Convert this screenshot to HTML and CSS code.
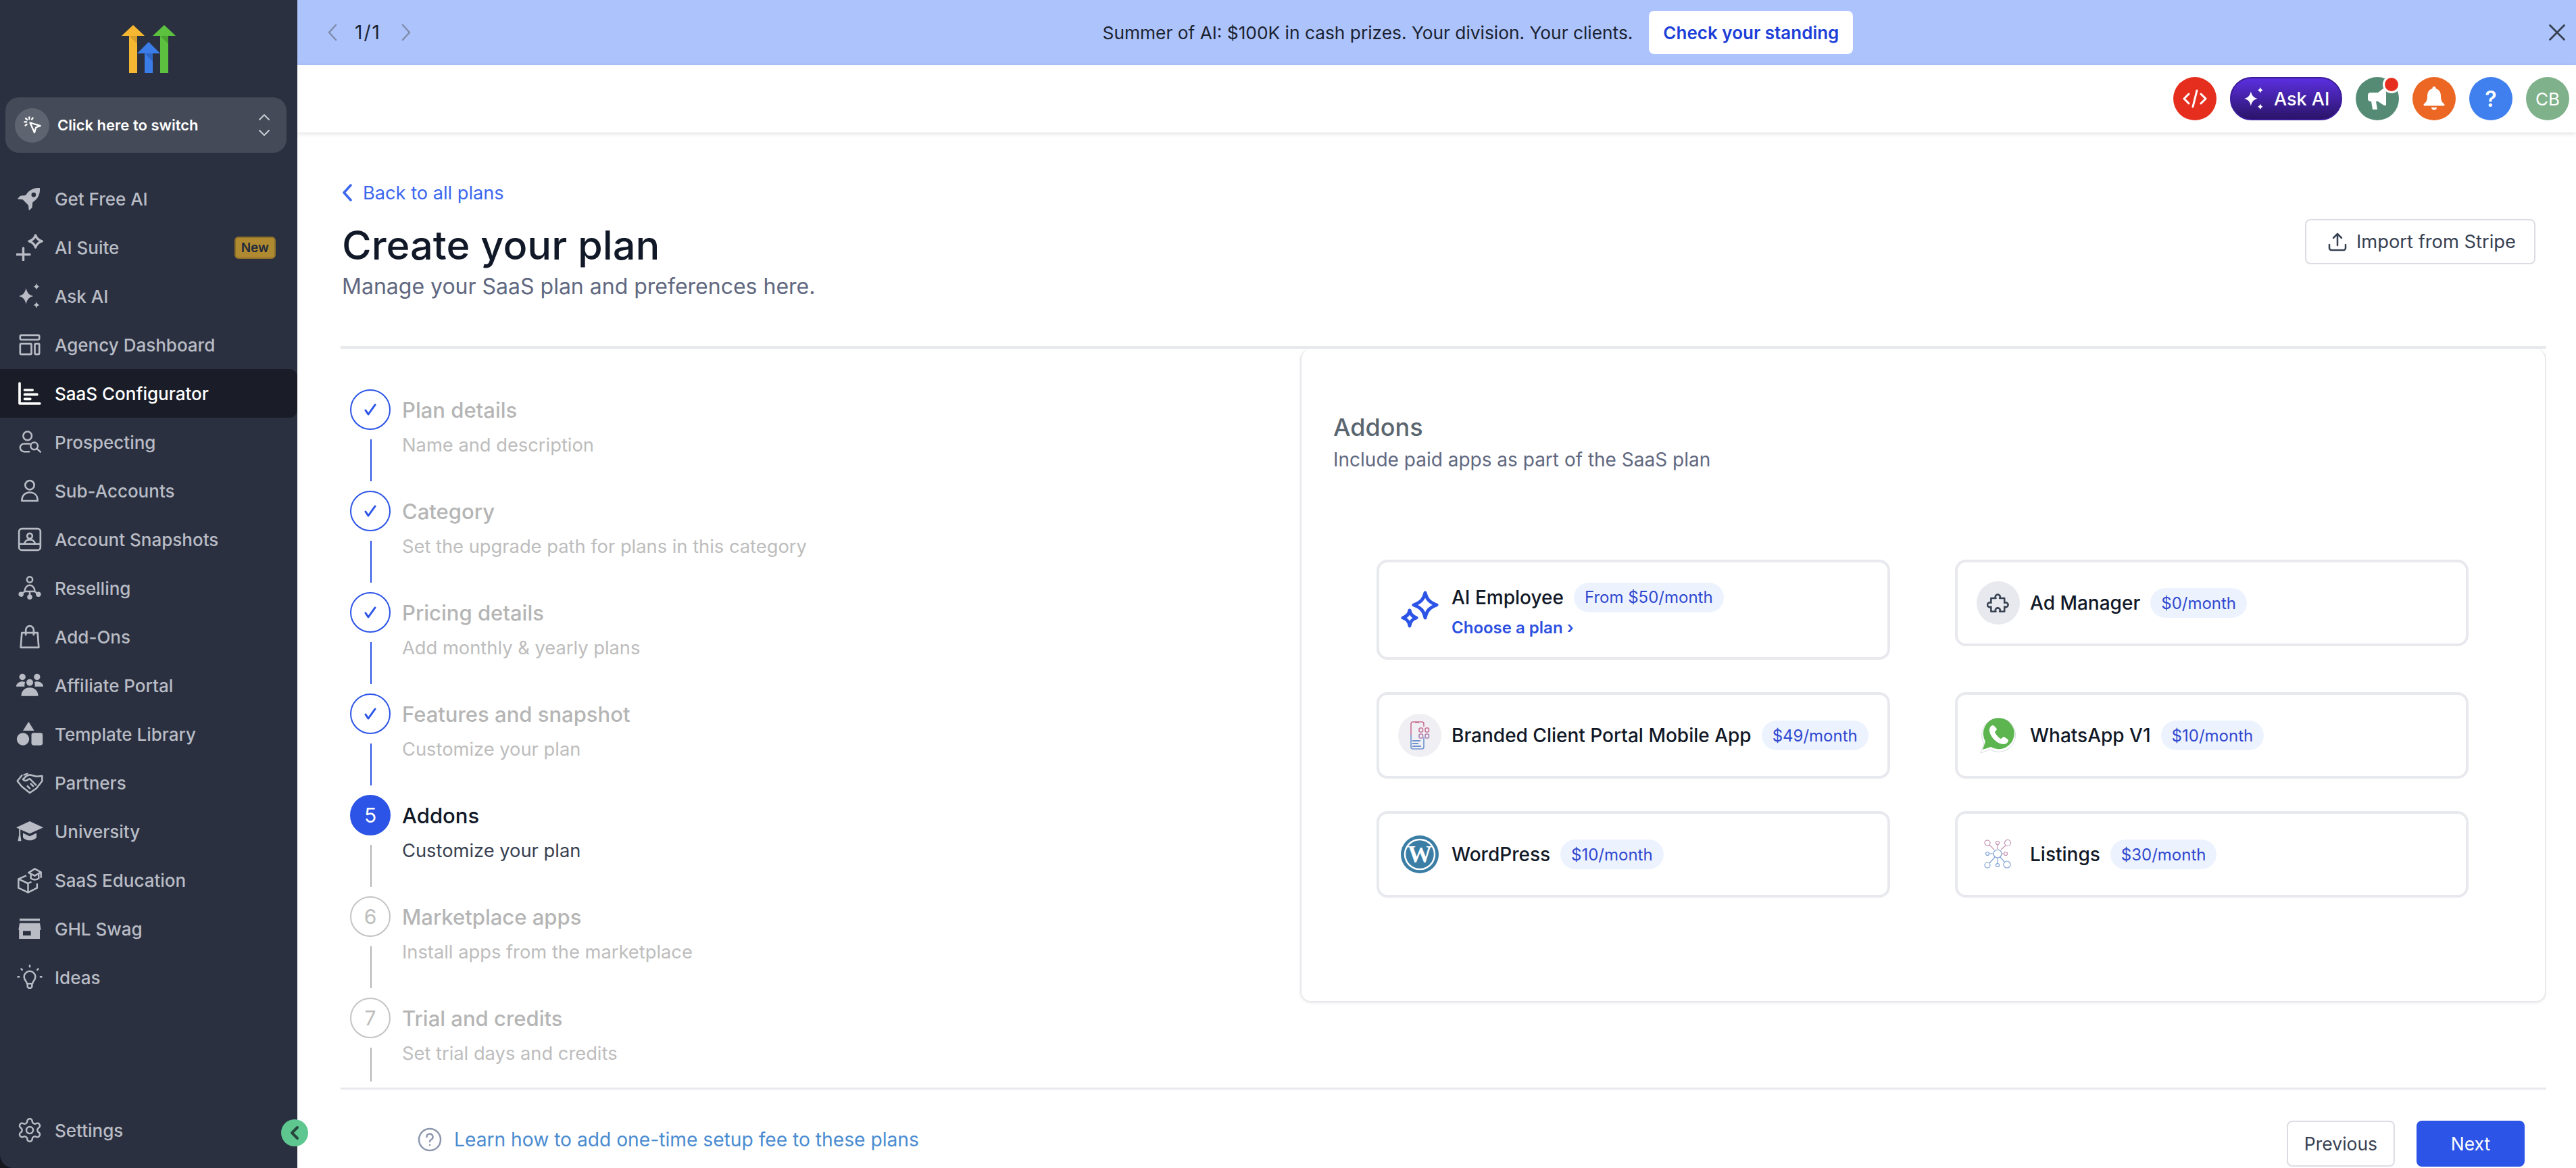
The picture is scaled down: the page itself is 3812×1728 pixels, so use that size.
FILE: index.html
```html
<!DOCTYPE html>
<html lang="en">
<head>
    <meta charset="UTF-8">
    <meta name="viewport" content="width=device-width, initial-scale=1.0">
    <title>Create your plan</title>
    <link rel="stylesheet" href="styles.css">
</head>
<body>
    <div class="app">
        <aside class="sidebar">
            <div class="logo">
                <svg width="80" height="71" viewBox="0 0 80 71">
                    <path fill="#f5b731" d="M17 0l17 16H23v55H11V16H0z"/>
                    <path fill="#d99f2d" d="M11 16h12v12z"/>
                    <path fill="#3b7de8" d="M40 25l17 17H46v29H34V42H23z"/>
                    <path fill="#2f66c4" d="M34 42h12v12z"/>
                    <path fill="#5cc13f" d="M63 0l17 16H69v55H57V16H46z"/>
                    <path fill="#4ba233" d="M57 16h12v12z"/>
                </svg>
            </div>
            <div class="switcher">
                <span class="switcher-icon">
                    <svg width="28" height="28" viewBox="0 0 24 24" fill="none" stroke="#fff" stroke-width="2" stroke-linecap="round" stroke-linejoin="round">
                        <path d="M9 9l13 4-5.500 2-2 6.500z"/>
                        <path d="M8 2v2.500M2 8h2.500M3.500 3.500l1.800 1.800M3 12.500l1.800-1.300M12.500 3l-1.300 1.800"/>
                    </svg>
                </span>
                <span class="switcher-label">Click here to switch</span>
                <svg class="switcher-caret" width="18" height="34" viewBox="0 0 18 34" fill="none" stroke="#c9ccd3" stroke-width="2" stroke-linecap="round" stroke-linejoin="round">
                    <path d="M2 9l7-7 7 7M2 25l7 7 7-7"/>
                </svg>
            </div>
            <nav class="nav">
                <a class="nav-item">
                    <svg class="nav-icon" viewBox="0 0 24 24" fill="currentColor"><path fill-rule="evenodd" d="M21 2.500c-4.500-.3-8.400 1.300-11 4.300L8.300 9 3.600 9.500 1 12.300l4.800.5 5 5 .5 4.700 2.800-2.600.5-4.700 2.200-1.700c3-2.600 4.500-6.500 4.200-11zM15.500 6.500a2 2 0 1 1 0 4 2 2 0 0 1 0-4z"/></svg>
                    Get Free AI
                </a>
                <a class="nav-item">
                    <svg class="nav-icon" viewBox="1 1.500 21 21" fill="none" stroke="currentColor" stroke-width="1.800" stroke-linecap="round" stroke-linejoin="round"><path d="M1.500 17.500h10M6.500 12.500v9.500"/><path d="M16 2.500c.7 2.300 2.200 3.800 5 4.700-2.800.9-4.300 2.400-5 4.800-.7-2.400-2.200-3.900-5-4.800 2.800-.9 4.300-2.400 5-4.700z"/></svg>
                    AI Suite
                    <span class="badge-new">New</span>
                </a>
                <a class="nav-item">
                    <svg class="nav-icon" viewBox="2 1 20 22" fill="currentColor"><path d="M9 5.500c.9 3.800 2.300 5.600 6 6.500-3.700.9-5.100 2.700-6 6.500-.9-3.800-2.300-5.600-6-6.500 3.700-.9 5.100-2.700 6-6.500zM17.500 1.500c.4 1.600 1.100 2.300 2.500 2.800-1.400.4-2.100 1.200-2.500 2.700-.4-1.500-1.100-2.300-2.500-2.700 1.400-.5 2.100-1.200 2.500-2.800zM17.500 16.500c.4 1.600 1.100 2.300 2.500 2.800-1.400.4-2.100 1.200-2.500 2.700-.4-1.500-1.100-2.300-2.500-2.700 1.400-.5 2.100-1.200 2.500-2.800z"/></svg>
                    Ask AI
                </a>
                <a class="nav-item">
                    <svg class="nav-icon" viewBox="0 0 24 24" fill="none" stroke="currentColor" stroke-width="1.600" stroke-linejoin="round"><rect x="3.500" y="3.500" width="17" height="4" rx="1"/><rect x="3.500" y="11" width="10" height="9.500" rx="1"/><rect x="16.500" y="11" width="4" height="9.500" rx="1"/></svg>
                    Agency Dashboard
                </a>
                <a class="nav-item active">
                    <svg class="nav-icon" viewBox="0 0 24 24" fill="none" stroke="currentColor" stroke-width="2.200" stroke-linecap="round" stroke-linejoin="round"><path d="M3 3v18h18"/><path d="M7.500 9h7M7.500 13h11M7.500 17h5"/></svg>
                    SaaS Configurator
                </a>
                <a class="nav-item">
                    <svg class="nav-icon" viewBox="0 0 24 24" fill="none" stroke="currentColor" stroke-width="1.500" stroke-linecap="round"><circle cx="10" cy="6.500" r="3.800"/><path d="M11.500 20.500H7a3.500 3.500 0 0 1 0-7h5"/><circle cx="16" cy="15.500" r="3.200"/><path d="M18.500 18l3 2.800"/></svg>
                    Prospecting
                </a>
                <a class="nav-item">
                    <svg class="nav-icon" viewBox="0 0 24 24" fill="none" stroke="currentColor" stroke-width="1.600" stroke-linejoin="round"><circle cx="12" cy="7" r="4"/><path d="M5 21c0-5 3-7.500 7-7.500s7 2.500 7 7.500z"/></svg>
                    Sub-Accounts
                </a>
                <a class="nav-item">
                    <svg class="nav-icon" viewBox="0 0 24 24" fill="none" stroke="currentColor" stroke-width="1.600" stroke-linejoin="round"><rect x="2.500" y="2.500" width="19" height="19" rx="2.500"/><path d="M2.500 16h19"/><circle cx="12" cy="9" r="2.300"/><path d="M7.500 16c0-2.500 2-3.800 4.500-3.800s4.500 1.300 4.500 3.800"/></svg>
                    Account Snapshots
                </a>
                <a class="nav-item">
                    <svg class="nav-icon" viewBox="0 0 24 24" fill="none" stroke="currentColor" stroke-width="1.500"><circle cx="12" cy="4.500" r="2.500"/><path d="M7.500 15c0-3 2-5.500 4.500-5.500s4.500 2.500 4.500 5.500M4.500 17.500l3-2.500h9l3 2.500M12 15v4"/><circle cx="4.300" cy="17.500" r="1.500" fill="currentColor"/><circle cx="12" cy="20" r="1.500" fill="currentColor"/><circle cx="19.700" cy="17.500" r="1.500" fill="currentColor"/></svg>
                    Reselling
                </a>
                <a class="nav-item">
                    <svg class="nav-icon" viewBox="0 0 24 24" fill="none" stroke="currentColor" stroke-width="1.600" stroke-linejoin="round"><path d="M5 8.500h14l1 13H4z"/><path d="M8.500 11V6a3.500 3.500 0 0 1 7 0v5"/></svg>
                    Add-Ons
                </a>
                <a class="nav-item">
                    <svg class="nav-icon" viewBox="0 0 24 24" fill="currentColor"><circle cx="5.500" cy="4.500" r="2.800"/><circle cx="18.500" cy="4.500" r="2.800"/><circle cx="12" cy="9.500" r="3"/><path d="M0 13c0-3 3-4.500 5.500-4.500 1 0 1.800.2 2.500.6-.6.900-.8 2.300-.5 3.900zM24 13c0-3-3-4.500-5.500-4.500-1 0-1.800.2-2.500.6.600.9.8 2.300.5 3.900zM4.500 21.500c0-5 3.500-7.500 7.500-7.500s7.500 2.500 7.500 7.500z"/></svg>
                    Affiliate Portal
                </a>
                <a class="nav-item">
                    <svg class="nav-icon" viewBox="0 0 24 24" fill="currentColor"><path d="M11 1l5 8H6z"/><circle cx="6" cy="16.500" r="5.500"/><rect x="13.500" y="11" width="10" height="11" rx="2"/></svg>
                    Template Library
                </a>
                <a class="nav-item">
                    <svg class="nav-icon" viewBox="0 0 24 24" fill="none" stroke="currentColor" stroke-width="1.500" stroke-linejoin="round" stroke-linecap="round"><path d="M5 5.500L1 10.500l4 5 7 5.500 6-4 5-6.500V6l-5 .5-6-1.500-3 1-3 3c1 1.500 3 1.500 4 .5l2-1 5.500 5.500"/><path d="M7 5l3-1"/><path d="M12 17l-2-2M15 15l-2-2"/></svg>
                    Partners
                </a>
                <a class="nav-item">
                    <svg class="nav-icon" viewBox="0 0 24 24" fill="currentColor"><path d="M12 3L0 8.500l2.500 1.300V15l-1 5.500h3l-.8-5.500V10.400L12 14l12-5.500z"/><path d="M6 13.500v4c1.500 1.600 3.700 2.500 6 2.500s4.500-.9 6-2.500v-4L12 16.300z"/></svg>
                    University
                </a>
                <a class="nav-item">
                    <svg class="nav-icon" viewBox="0 0 24 24" fill="none" stroke="currentColor" stroke-width="1.500" stroke-linejoin="round"><path d="M9 8L2 11v8l8.500 4 8-4v-4M2 11l8.500 4 3-1.500M10.500 15v8"/><path d="M11 5.500L16.500 2 22 5l-5.500 3.200zM13 7v3.500c2 1.500 5 1.500 7 0V6.500M22 5v5"/></svg>
                    SaaS Education
                </a>
                <a class="nav-item">
                    <svg class="nav-icon" viewBox="0 0 24 24" fill="currentColor"><path d="M3 3h18v2H3z"/><path fill-rule="evenodd" d="M3 7h18l1 6h-1v8H2.500v-8H2zM6 14v4h7v-4z"/></svg>
                    GHL Swag
                </a>
                <a class="nav-item">
                    <svg class="nav-icon" viewBox="0 0 24 24" fill="none" stroke="currentColor" stroke-width="1.500" stroke-linecap="round" stroke-linejoin="round"><path d="M9.500 17.500c0-2-2.500-3-2.500-6a5 5 0 0 1 10 0c0 3-2.500 4-2.500 6zM10 20c.5 2 3.500 2 4 0v-2.500h-4z"/><path d="M12 1.500v1M4.500 4.500l.8.8M19.500 4.500l-.8.8M1.500 11.500h1M21.500 11.500h1"/></svg>
                    Ideas
                </a>
                <a class="nav-item nav-bottom">
                    <svg class="nav-icon" viewBox="0 0 24 24" fill="none" stroke="currentColor" stroke-width="1.500" stroke-linejoin="round"><path d="M12.220 2h-.44a2 2 0 0 0-2 2v.18a2 2 0 0 1-1 1.730l-.43.250a2 2 0 0 1-2 0l-.15-.08a2 2 0 0 0-2.730.730l-.22.380a2 2 0 0 0 .730 2.730l.15.1a2 2 0 0 1 1 1.720v.51a2 2 0 0 1-1 1.740l-.15.090a2 2 0 0 0-.730 2.730l.22.380a2 2 0 0 0 2.730.730l.15-.08a2 2 0 0 1 2 0l.43.250a2 2 0 0 1 1 1.730V20a2 2 0 0 0 2 2h.44a2 2 0 0 0 2-2v-.18a2 2 0 0 1 1-1.730l.43-.25a2 2 0 0 1 2 0l.15.08a2 2 0 0 0 2.730-.73l.22-.39a2 2 0 0 0-.73-2.730l-.15-.08a2 2 0 0 1-1-1.740v-.5a2 2 0 0 1 1-1.740l.15-.09a2 2 0 0 0 .73-2.730l-.22-.38a2 2 0 0 0-2.730-.73l-.15.08a2 2 0 0 1-2 0l-.43-.25a2 2 0 0 1-1-1.730V4a2 2 0 0 0-2-2z"/><circle cx="12" cy="12" r="3"/></svg>
                    Settings
                </a>
            </nav>
            <span class="collapse-toggle">
                <svg width="16" height="22" viewBox="0 0 16 22" fill="none" stroke="#27463c" stroke-width="4" stroke-linecap="round" stroke-linejoin="round"><path d="M12 3l-8 8 8 8"/></svg>
            </span>
        </aside>

        <div class="main">
            <div class="banner">
                <div class="pager">
                    <svg width="14" height="26" viewBox="0 0 14 26" fill="none" stroke="#7f8cab" stroke-width="2.500" stroke-linecap="round" stroke-linejoin="round"><path d="M12 2L2 13l10 11"/></svg>
                    <span class="pager-count">1/1</span>
                    <svg width="14" height="26" viewBox="0 0 14 26" fill="none" stroke="#7f8cab" stroke-width="2.500" stroke-linecap="round" stroke-linejoin="round"><path d="M2 2l10 11L2 24"/></svg>
                </div>
                <div class="banner-message">
                    <span>Summer of AI: $100K in cash prizes. Your division. Your clients.</span>
                    <button class="banner-btn">Check your standing</button>
                </div>
                <svg class="banner-close" width="24" height="24" viewBox="0 0 24 24" fill="none" stroke="#374151" stroke-width="2.800" stroke-linecap="round"><path d="M1.500 1.500l21 21M22.500 1.500l-21 21"/></svg>
            </div>

            <header class="topbar">
                <span class="top-circle red">
                    <svg width="36" height="28" viewBox="0 0 36 28" fill="none" stroke="#fff" stroke-width="3" stroke-linecap="round" stroke-linejoin="round"><path d="M9 7l-7 7 7 7M27 7l7 7-7 7M21 2l-6 24"/></svg>
                </span>
                <span class="ask-ai">
                    <svg width="32" height="36" viewBox="2.500 1 18 22" fill="#fff"><path d="M9 5.500c.9 3.800 2.300 5.600 6 6.500-3.700.9-5.100 2.700-6 6.500-.9-3.800-2.300-5.600-6-6.500 3.700-.9 5.100-2.700 6-6.500zM17.500 1.500c.4 1.600 1.100 2.300 2.500 2.800-1.400.4-2.100 1.200-2.500 2.700-.4-1.500-1.100-2.300-2.500-2.700 1.400-.5 2.100-1.200 2.500-2.800zM17.500 16.500c.4 1.600 1.100 2.300 2.500 2.800-1.400.4-2.100 1.200-2.500 2.700-.4-1.500-1.100-2.300-2.500-2.700 1.400-.5 2.100-1.200 2.500-2.800z"/></svg>
                    Ask AI
                </span>
                <span class="top-circle green">
                    <svg width="30" height="34" viewBox="0 0 30 34" fill="#fff"><path d="M25 1h3v26h-3l-9-6H13l2 12H8L6 21H5a4 4 0 0 1-4-4v-5a4 4 0 0 1 4-4h11z"/></svg>
                    <span class="notify-dot"></span>
                </span>
                <span class="top-circle orange">
                    <svg width="32" height="36" viewBox="0 0 32 36" fill="#fff"><path d="M16 0a2.500 2.500 0 0 1 2.500 3C24 4.500 26 9 26 14c0 6 1.500 9 5 12 1 1 .5 2.500-1 2.500H2C.5 28.500 0 27 1 26c3.500-3 5-6 5-12C6 9 8 4.500 13.500 3A2.500 2.500 0 0 1 16 0z"/><path d="M12 31h8c0 5-8 5-8 0z"/></svg>
                </span>
                <span class="top-circle blue">?</span>
                <span class="top-circle avatar">CB</span>
            </header>

            <div class="content">
                <div class="page-head">
                    <div>
                        <a class="back-link">
                            <svg width="16" height="28" viewBox="0 0 16 28" fill="none" stroke="#3b66ee" stroke-width="3.500" stroke-linecap="round" stroke-linejoin="round"><path d="M13 3L3 14l10 11"/></svg>
                            Back to all plans
                        </a>
                        <h1>Create your plan</h1>
                        <p class="page-sub">Manage your SaaS plan and preferences here.</p>
                    </div>
                    <button class="btn-import">
                        <svg width="28" height="28" viewBox="0 0 28 28" fill="none" stroke="#374151" stroke-width="2.500" stroke-linecap="round" stroke-linejoin="round"><path d="M2 18v5a3 3 0 0 0 3 3h18a3 3 0 0 0 3-3v-5M14 19V2M8 8l6-6 6 6"/></svg>
                        Import from Stripe
                    </button>
                </div>

                <div class="wizard">
                    <ol class="steps">
                        <li class="step done">
                            <div class="step-rail"><span class="step-dot"><svg class="step-check" width="18" height="18" viewBox="0 0 18 18"><path d="M2 10l4 6L16 2"/></svg></span><span class="step-line"></span></div>
                            <div><div class="step-title">Plan details</div><div class="step-desc">Name and description</div></div>
                        </li>
                        <li class="step done">
                            <div class="step-rail"><span class="step-dot"><svg class="step-check" width="18" height="18" viewBox="0 0 18 18"><path d="M2 10l4 6L16 2"/></svg></span><span class="step-line"></span></div>
                            <div><div class="step-title">Category</div><div class="step-desc">Set the upgrade path for plans in this category</div></div>
                        </li>
                        <li class="step done">
                            <div class="step-rail"><span class="step-dot"><svg class="step-check" width="18" height="18" viewBox="0 0 18 18"><path d="M2 10l4 6L16 2"/></svg></span><span class="step-line"></span></div>
                            <div><div class="step-title">Pricing details</div><div class="step-desc">Add monthly &amp; yearly plans</div></div>
                        </li>
                        <li class="step done">
                            <div class="step-rail"><span class="step-dot"><svg class="step-check" width="18" height="18" viewBox="0 0 18 18"><path d="M2 10l4 6L16 2"/></svg></span><span class="step-line"></span></div>
                            <div><div class="step-title">Features and snapshot</div><div class="step-desc">Customize your plan</div></div>
                        </li>
                        <li class="step current">
                            <div class="step-rail"><span class="step-dot">5</span><span class="step-line"></span></div>
                            <div><div class="step-title">Addons</div><div class="step-desc">Customize your plan</div></div>
                        </li>
                        <li class="step">
                            <div class="step-rail"><span class="step-dot">6</span><span class="step-line"></span></div>
                            <div><div class="step-title">Marketplace apps</div><div class="step-desc">Install apps from the marketplace</div></div>
                        </li>
                        <li class="step last">
                            <div class="step-rail"><span class="step-dot">7</span><span class="step-line"></span></div>
                            <div><div class="step-title">Trial and credits</div><div class="step-desc">Set trial days and credits</div></div>
                        </li>
                    </ol>

                    <section class="panel">
                        <h2>Addons</h2>
                        <p class="panel-sub">Include paid apps as part of the SaaS plan</p>
                        <div class="addon-grid">
                            <div class="addon">
                                <span class="addon-icon">
                                    <svg width="58" height="58" viewBox="0 0 58 58" fill="none" stroke="#2c54e6" stroke-width="5" stroke-linejoin="round"><path d="M37 4c2 9 6 14 17 18-11 4-15 9-17 19-2-10-6-15-17-19 11-4 15-9 17-18z"/><path d="M14 30c1 6 4 9 10 11-6 2-9 5-10 12-1-7-4-10-10-12 6-2 9-5 10-11z"/></svg>
                                </span>
                                <div>
                                    <div class="addon-head">
                                        <span class="addon-name">AI Employee</span>
                                        <span class="addon-price">From $50/month</span>
                                    </div>
                                    <a class="addon-link">Choose a plan ›</a>
                                </div>
                            </div>
                            <div class="addon">
                                <span class="addon-icon round">
                                    <svg width="34" height="34" viewBox="0 0 24 24" fill="none" stroke="#374151" stroke-width="1.800" stroke-linejoin="round"><path d="M4.500 7h5a2.400 2.400 0 1 1 4 0h5v5a2.400 2.400 0 1 1 0 4v5h-5a2.400 2.400 0 1 0-4 0h-5v-5a2.400 2.400 0 1 1 0-4z"/></svg>
                                </span>
                                <span class="addon-name">Ad Manager</span>
                                <span class="addon-price">$0/month</span>
                            </div>
                            <div class="addon">
                                <span class="addon-icon round light">
                                    <svg width="30" height="44" viewBox="0 0 30 44" fill="none" stroke-width="1.600">
                                        <path stroke="#c86f93" d="M21 9V5a3 3 0 0 0-3-3H5a3 3 0 0 0-3 3v16M8 3h6"/>
                                        <path stroke="#6f93cf" d="M2 21v18a3 3 0 0 0 3 3h13a3 3 0 0 0 3-3v-14"/>
                                        <rect stroke="#c86f93" x="14" y="11" width="5.500" height="6" rx="2"/>
                                        <rect stroke="#c86f93" x="23" y="11" width="5.500" height="6" rx="2"/>
                                        <rect stroke="#a97fb0" x="14" y="20" width="5.500" height="6" rx="2"/>
                                        <rect stroke="#a97fb0" x="23" y="20" width="5.500" height="6" rx="2"/>
                                        <path stroke="#6f93cf" stroke-width="2" d="M4 30h12M4 34h9M4 38h13"/>
                                    </svg>
                                </span>
                                <span class="addon-name">Branded Client Portal Mobile App</span>
                                <span class="addon-price">$49/month</span>
                            </div>
                            <div class="addon">
                                <span class="addon-icon">
                                    <svg width="56" height="56" viewBox="0 0 56 56">
                                        <path fill="#fff" stroke="#d7dbe0" d="M2 54l5-14a25 25 0 1 1 9 9z"/>
                                        <path fill="#5cb54f" d="M5 49l4-12a23 23 0 1 1 8 8z"/>
                                        <path fill="#fff" d="M20 13c-2 0-5 3-5 7 0 9 11 21 21 21 4 0 7-3 7-6 0-1-6-5-7-5s-3 3-4 3c-3-1-8-7-9-10 0-1 3-3 3-4s-4-6-6-6z"/>
                                    </svg>
                                </span>
                                <span class="addon-name">WhatsApp V1</span>
                                <span class="addon-price">$10/month</span>
                            </div>
                            <div class="addon">
                                <span class="addon-icon">
                                    <svg width="56" height="56" viewBox="0 0 56 56">
                                        <circle cx="28" cy="28" r="28" fill="#3a7ea6"/>
                                        <circle cx="28" cy="28" r="22" fill="none" stroke="#fff" stroke-width="2.500"/>
                                        <text class="wp-mark" x="28" y="40" text-anchor="middle">W</text>
                                    </svg>
                                </span>
                                <span class="addon-name">WordPress</span>
                                <span class="addon-price">$10/month</span>
                            </div>
                            <div class="addon">
                                <span class="addon-icon">
                                    <svg width="42" height="44" viewBox="0 0 42 44" fill="none" stroke-width="1.200">
                                        <g stroke="#c28fb0">
                                            <circle cx="5" cy="5" r="4"/><circle cx="20" cy="5" r="2.500"/><circle cx="35" cy="5" r="4.500"/><circle cx="32" cy="21" r="2.500"/>
                                            <path d="M8 8l7 7M20 8v6M32 9l-7 6M29 21h-3"/>
                                        </g>
                                        <g stroke="#7f9fd4">
                                            <circle cx="20" cy="21" r="6"/><circle cx="5" cy="21" r="2.500"/><circle cx="5" cy="38" r="4"/><circle cx="20" cy="38" r="2.500"/><circle cx="34" cy="37" r="5"/>
                                            <path d="M8 35l8-9M20 27v8M30 33l-6-7M8 21h6"/>
                                        </g>
                                    </svg>
                                </span>
                                <span class="addon-name">Listings</span>
                                <span class="addon-price">$30/month</span>
                            </div>
                        </div>
                    </section>
                </div>

                <footer class="wizard-foot">
                    <a class="help-link">
                        <svg width="36" height="36" viewBox="0 0 36 36" fill="none" stroke="#8d97ad" stroke-width="2.500" stroke-linecap="round"><circle cx="18" cy="18" r="16"/><path d="M13.500 14a4.500 4.500 0 1 1 6.500 4c-1.300.8-2 1.500-2 3"/><path d="M18 26v.1"/></svg>
                        Learn how to add one-time setup fee to these plans
                    </a>
                    <div class="foot-actions">
                        <button class="btn btn-outline">Previous</button>
                        <button class="btn btn-primary">Next</button>
                    </div>
                </footer>
            </div>
        </div>
    </div>
</body>
</html>
```

FILE: styles.css
```css
* {
    margin: 0;
    padding: 0;
    box-sizing: border-box;
}

html, body {
    height: 100%;
    overflow: hidden;
}

body {
    font-family: 'Inter', 'Liberation Sans', sans-serif;
    color: #111827;
    background: #fff;
}

button {
    font-family: inherit;
    cursor: pointer;
}

.app {
    display: flex;
    height: 1728px;
    background: #15171d;
}

/* sidebar */
.sidebar {
    position: relative;
    z-index: 2;
    flex: 0 0 440px;
    display: flex;
    flex-direction: column;
    background: #2a3040;
    border-bottom-left-radius: 20px;
}

.logo {
    display: flex;
    justify-content: center;
    padding-top: 37px;
    margin-bottom: 36px;
}

.switcher {
    display: flex;
    align-items: center;
    width: 416px;
    height: 82px;
    margin-left: 8px;
    padding: 0 24px 0 14px;
    background: #444a57;
    border-radius: 20px;
}

.switcher-icon {
    display: flex;
    align-items: center;
    justify-content: center;
    width: 51px;
    height: 51px;
    background: #5f6570;
    border-radius: 50%;
}

.switcher-label {
    margin-left: 12px;
    color: #fff;
    font-size: 22px;
    font-weight: 600;
}

.switcher-caret {
    margin-left: auto;
}

.nav {
    flex: 1;
    display: flex;
    flex-direction: column;
    margin-top: 32px;
    padding-bottom: 20px;
}

.nav-item {
    display: flex;
    align-items: center;
    flex: 0 0 72px;
    gap: 17px;
    padding: 0 32px 0 24px;
    color: #b9bcc5;
    font-size: 26px;
    font-weight: 500;
}

.nav-icon {
    flex: 0 0 40px;
    width: 40px;
    height: 40px;
}

.nav-item.active {
    color: #fff;
    background: #1a1d27;
    border-radius: 0 12px 12px 0;
}

.nav-bottom {
    margin-top: auto;
}

.badge-new {
    margin-left: auto;
    padding: 3px 8px;
    color: #1f2a3c;
    font-size: 19px;
    font-weight: 600;
    background: #b08a31;
    border: 2px solid #8f7029;
    border-radius: 6px;
}

.collapse-toggle {
    position: absolute;
    right: -16px;
    bottom: 32px;
    display: flex;
    align-items: center;
    justify-content: center;
    width: 40px;
    height: 40px;
    background: #5ec78f;
    border-radius: 50%;
}

/* banner + top bar */
.main {
    flex: 1;
    display: flex;
    flex-direction: column;
    min-width: 0;
    background: #fff;
}

.banner {
    position: relative;
    display: flex;
    align-items: center;
    justify-content: center;
    flex: 0 0 96px;
    padding-left: 122px;
    background: #adc3fc;
}

.pager {
    position: absolute;
    left: 45px;
    display: flex;
    align-items: center;
    gap: 26px;
    color: #1a2230;
    font-size: 28px;
}

.pager-count {
    margin-right: 4px;
    letter-spacing: 2px;
}

.banner-message {
    display: flex;
    align-items: center;
    gap: 24px;
    font-size: 26.3px;
    color: #1a2230;
}

.banner-btn {
    height: 64px;
    padding: 0 21px;
    color: #1d3fd8;
    font-size: 26px;
    font-weight: 600;
    background: #fff;
    border: none;
    border-radius: 8px;
}

.banner-close {
    position: absolute;
    right: 16px;
}

.topbar {
    position: relative;
    z-index: 1;
    flex: 0 0 100px;
    display: flex;
    align-items: center;
    justify-content: flex-end;
    gap: 20px;
    padding-right: 10px;
    background: #fff;
    box-shadow: 0 2px 6px rgba(0, 0, 0, 0.12);
}

.top-circle {
    position: relative;
    display: flex;
    align-items: center;
    justify-content: center;
    width: 64px;
    height: 64px;
    color: #fff;
    border-radius: 50%;
}

.red { background: #e52e1d; }
.green { background: #558b75; }
.orange { background: #ec6724; }
.blue { background: #3f80ee; font-size: 32px; font-weight: 600; }
.avatar { background: #7fb28a; font-size: 26px; }

.notify-dot {
    position: absolute;
    top: -2px;
    right: -2px;
    width: 26px;
    height: 26px;
    background: #e52e1d;
    border: 3px solid #fff;
    border-radius: 50%;
}

.ask-ai {
    display: flex;
    align-items: center;
    gap: 14px;
    width: 166px;
    height: 64px;
    padding-left: 17px;
    color: #fff;
    font-size: 27px;
    font-weight: 500;
    background: linear-gradient(180deg, #5b2fe0 0%, #2a1468 100%);
    border: 2px solid #3c1c9a;
    border-radius: 32px;
}

/* page content */
.content {
    flex: 1;
    display: flex;
    flex-direction: column;
    min-height: 0;
    margin: 0 44px 0 64px;
}

.page-head {
    flex: 0 0 316px;
    display: flex;
    justify-content: space-between;
    align-items: flex-start;
    padding: 73px 16px 0 2px;
}

.back-link {
    display: flex;
    align-items: center;
    gap: 15px;
    height: 32px;
    color: #3b66ee;
    font-size: 27.2px;
}

.page-head h1 {
    margin-top: 27px;
    font-size: 59.5px;
    line-height: 68px;
    font-weight: 500;
    color: #111827;
}

.page-sub {
    margin-top: 8px;
    font-size: 32px;
    line-height: 40px;
    color: #5f6880;
}

.btn-import {
    display: flex;
    align-items: center;
    gap: 14px;
    width: 341px;
    height: 67px;
    margin-top: 55px;
    padding-left: 32px;
    color: #374151;
    font-size: 27.3px;
    background: #fff;
    border: 2px solid #dcdde4;
    border-radius: 8px;
}

.wizard {
    flex: 0 0 1097px;
    display: flex;
    border-top: 4px solid #e8e9ed;
    overflow: hidden;
}

.steps {
    flex: 0 0 1420px;
    padding: 60px 0 0 14px;
    list-style: none;
}

.step {
    display: flex;
    gap: 17px;
    height: 150px;
}

.step-rail {
    flex: 0 0 60px;
    display: flex;
    flex-direction: column;
    align-items: center;
}

.step-dot {
    display: flex;
    align-items: center;
    justify-content: center;
    width: 60px;
    height: 60px;
    color: #bdbdbd;
    font-size: 30px;
    border: 2px solid #c4c4c4;
    border-radius: 50%;
}

.step-check {
    fill: none;
    stroke: #2c54e6;
    stroke-width: 3;
    stroke-linecap: round;
    stroke-linejoin: round;
}

.step-line {
    width: 2px;
    height: 62px;
    margin: 14px 0 0 2px;
    background: #b5b5b5;
}

.last .step-line {
    height: 50px;
}

.step-title {
    margin-top: 11px;
    font-size: 31px;
    line-height: 40px;
    font-weight: 500;
    color: #b5b5b5;
}

.step-desc {
    margin-top: 14px;
    font-size: 27.3px;
    line-height: 36px;
    color: #bdbdbd;
}

.done .step-dot {
    border-color: #2c54e6;
}

.done .step-line {
    background: #2c54e6;
}

.current .step-dot {
    color: #fff;
    background: #2c54e6;
    border-color: #2c54e6;
}

.current .step-title {
    color: #111827;
}

.current .step-desc {
    color: #374151;
}

.panel {
    flex: 0 0 1844px;
    height: 967px;
    padding: 94px 0 0 47px;
    border: 2px solid #e8e9ed;
    border-top: none;
    border-radius: 16px;
    box-shadow: 0 1px 4px rgba(0, 0, 0, 0.08);
}

.panel h2 {
    font-size: 36px;
    line-height: 44px;
    font-weight: 500;
    color: #5a666f;
}

.panel-sub {
    margin-top: 8px;
    font-size: 28px;
    line-height: 36px;
    color: #5f6880;
}

.addon-grid {
    display: grid;
    grid-template-columns: 760px 760px;
    column-gap: 96px;
    row-gap: 48px;
    align-items: start;
    margin: 130px 0 0 64px;
}

.addon {
    display: flex;
    align-items: center;
    min-height: 128px;
    padding: 0 0 0 28px;
    border: 4px solid #e8e9ee;
    border-radius: 16px;
}

.addon:first-child {
    min-height: 148px;
}

.addon-icon {
    flex: 0 0 64px;
    display: flex;
    align-items: center;
    justify-content: center;
    height: 64px;
    margin-right: 15px;
}

.addon-icon.round {
    background: #e8e9ee;
    border-radius: 50%;
}

.addon-icon.light {
    background: #f0f0f4;
}

.addon-head {
    display: flex;
    align-items: center;
}

.addon-name {
    font-size: 28px;
    font-weight: 500;
    white-space: nowrap;
    color: #111827;
}

.addon-price {
    display: flex;
    align-items: center;
    height: 44px;
    margin-left: 15px;
    padding: 0 16px;
    color: #3048d0;
    font-size: 24px;
    white-space: nowrap;
    background: #edf3fe;
    border-radius: 22px;
}

.addon-link {
    display: block;
    margin-top: 8px;
    color: #2b4fe0;
    font-size: 24px;
    font-weight: 600;
}

.wp-mark {
    font-family: 'Liberation Serif', serif;
    font-size: 36px;
    font-weight: 700;
    fill: #fff;
}

.wizard-foot {
    flex: 1;
    display: flex;
    justify-content: space-between;
    align-items: flex-start;
    padding: 46px 32px 0 114px;
    border-top: 3px solid #e8e9ed;
}

.help-link {
    display: flex;
    align-items: center;
    gap: 18px;
    margin-top: 10px;
    color: #4a8bd0;
    font-size: 28.2px;
}

.foot-actions {
    display: flex;
    gap: 32px;
}

.btn {
    width: 160px;
    height: 68px;
    font-size: 26.5px;
    border-radius: 8px;
}

.btn-outline {
    color: #374151;
    background: #fff;
    border: 2px solid #dcdde4;
}

.btn-primary {
    color: #fff;
    background: #2c54e6;
    border: none;
}
```
